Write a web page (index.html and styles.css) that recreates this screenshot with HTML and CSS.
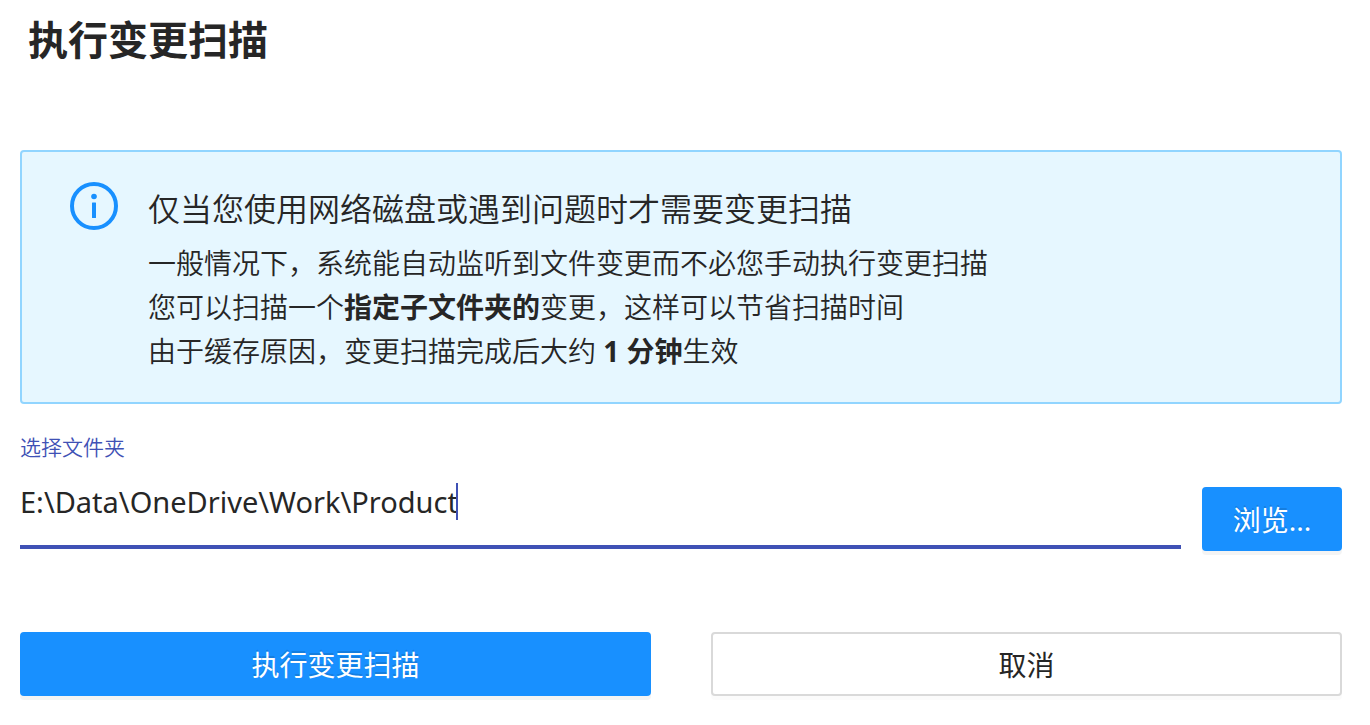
FILE: index.html
```html
<!DOCTYPE html>
<html lang="zh-CN">
<head>
  <meta charset="UTF-8" />
  <meta name="viewport" content="width=device-width, initial-scale=1.0" />
  <title>执行变更扫描</title>
  <link rel="stylesheet" href="styles.css">
</head>
<body>
  <form class="scan-dialog" id="scan-form">
    <h1 class="title">执行变更扫描</h1>

    <section class="alert">
      <svg class="alert-icon" viewBox="0 0 48 48" aria-hidden="true">
        <circle cx="24" cy="24" r="22" fill="none" stroke="#1890ff" stroke-width="4" />
        <circle cx="24" cy="14.5" r="2.8" fill="#1890ff" />
        <rect x="22" y="20.5" width="4" height="15.5" rx="0.5" fill="#1890ff" />
      </svg>
      <div class="alert-body">
        <h2 class="alert-title">仅当您使用网络磁盘或遇到问题时才需要变更扫描</h2>
        <p>一般情况下，系统能自动监听到文件变更而不必您手动执行变更扫描</p>
        <p>您可以扫描一个<strong>指定子文件夹的</strong>变更，这样可以节省扫描时间</p>
        <p>由于缓存原因，变更扫描完成后大约 <strong>1 分钟</strong>生效</p>
      </div>
    </section>

    <div class="folder-row">
      <div class="field">
        <label for="folder">选择文件夹</label>
        <div class="input-wrap">
          <input type="text" id="folder" value="E:\Data\OneDrive\Work\Product" autocomplete="off" spellcheck="false">
          <span class="caret"></span>
        </div>
      </div>
      <button type="button" class="btn btn-primary browse">浏览...</button>
    </div>

    <div class="actions">
      <button type="submit" class="btn btn-primary">执行变更扫描</button>
      <button type="button" class="btn">取消</button>
    </div>
  </form>

  <script>
    document.getElementById('scan-form').addEventListener('submit', function(e) {
      e.preventDefault();
    });
  </script>
</body>
</html>
```
FILE: styles.css
```css
* {
  box-sizing: border-box;
}
body {
  margin: 0;
  background: #fff;
  color: #262626;
  font-family: "Noto Sans", "Noto Sans CJK SC", sans-serif;
  font-size: 28px;
}
.scan-dialog {
  padding: 10px 28px 28px 20px;
}
.title {
  margin: 0 8px 80px;
  font-size: 40px;
  line-height: 60px;
  font-weight: 700;
}
.alert {
  display: flex;
  gap: 30px;
  padding: 30px 48px 29px;
  background: #e6f7ff;
  border: 2px solid #91d5ff;
  border-radius: 4px;
  font-weight: 350;
}
.alert-icon {
  flex: none;
  width: 48px;
  height: 48px;
}
.alert-title {
  margin: 0 0 5px;
  font-size: 32px;
  line-height: 54px;
  font-weight: 350;
}
.alert p {
  margin: 0;
  line-height: 44px;
}
.alert strong {
  font-weight: 700;
}
.folder-row {
  display: flex;
  align-items: flex-end;
  gap: 21px;
  margin-top: 28px;
}
.field {
  flex: 1;
  min-width: 0;
  margin-bottom: 2px;
}
.field label {
  display: block;
  color: #3f51b5;
  font-size: 21px;
  line-height: 30px;
  font-weight: 350;
}
.input-wrap {
  position: relative;
}
.field input {
  display: block;
  width: 100%;
  height: 87px;
  padding: 0 0 5px;
  border: none;
  border-bottom: 4px solid #3f51b5;
  outline: none;
  background: none;
  color: #262626;
  caret-color: #3f51b5;
  font: inherit;
  font-size: 29px;
}
/* insertion mark at the end of the path */
.caret {
  position: absolute;
  top: 21px;
  left: 436px;
  width: 2px;
  height: 37px;
  background: #3f51b5;
}
.input-wrap:focus-within .caret {
  display: none;
}
.btn {
  height: 64px;
  padding: 0 28px;
  border: 2px solid #d9d9d9;
  border-radius: 4px;
  background: #fff;
  box-shadow: 0 4px 0 rgba(0, 0, 0, 0.016);
  color: #262626;
  font: inherit;
  cursor: pointer;
}
.btn-primary {
  border-color: #1890ff;
  background: #1890ff;
  box-shadow: 0 4px 0 rgba(0, 0, 0, 0.045);
  color: #fff;
  text-shadow: 0 -2px 0 rgba(0, 0, 0, 0.12);
}
.browse {
  min-width: 140px;
}
.actions {
  display: grid;
  grid-template-columns: 1fr 1fr;
  gap: 60px;
  margin-top: 81px;
}
```
